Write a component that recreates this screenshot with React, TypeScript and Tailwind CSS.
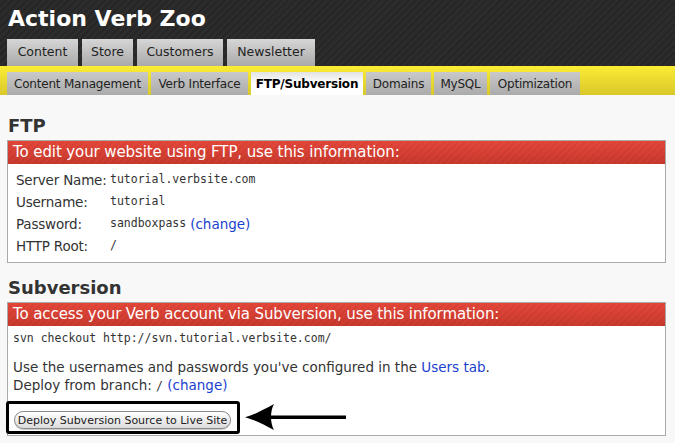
import React from "react";

const topTabs = [
  { label: "Content", w: "w-[71px]" },
  { label: "Store", w: "w-[51px]" },
  { label: "Customers", w: "w-[86px]" },
  { label: "Newsletter", w: "w-[88px]" },
];

const subTabs = [
  { label: "Content Management", w: "w-[141px]" },
  { label: "Verb Interface", w: "w-[97px]" },
  { label: "FTP/Subversion", w: "w-[112px]", active: true },
  { label: "Domains", w: "w-[65px]" },
  { label: "MySQL", w: "w-[53px]" },
  { label: "Optimization", w: "w-[90px]" },
];

const ftpRows = [
  { label: "Server Name:", value: "tutorial.verbsite.com" },
  { label: "Username:", value: "tutorial" },
  { label: "Password:", value: "sandboxpass", change: true },
  { label: "HTTP Root:", value: "/" },
];

const sans = "font-['DejaVu_Sans',Verdana,sans-serif]";
const mono = "font-['DejaVu_Sans_Mono',monospace]";

function RedBar({ children }: { children: React.ReactNode }) {
  return (
    <div className="h-[23px] flex items-center pl-[5px] text-white text-[15px] tracking-[-0.1px] bg-[repeating-linear-gradient(135deg,rgba(0,0,0,0)_0px,rgba(0,0,0,0)_3px,rgba(0,0,0,0.045)_3px,rgba(0,0,0,0.045)_5px),linear-gradient(#e5473a,#c93a2d)]">
      {children}
    </div>
  );
}

export default function App() {
  return (
    <div className={`w-[675px] h-[443px] overflow-hidden bg-[#f8f8f8] ${sans}`}>
      <div className="h-[66px] flex flex-col px-[7px] bg-[repeating-linear-gradient(135deg,#2c2c2c_0px,#2c2c2c_3px,#262626_3px,#262626_5px)]">
        <h1 className="text-white font-bold text-[22px] leading-none pt-[8px] pl-[1px]">
          Action Verb Zoo
        </h1>
        <div className="mt-auto flex gap-[4px]">
          {topTabs.map((t) => (
            <div
              key={t.label}
              className={`${t.w} h-[27px] flex items-center justify-center text-[12.5px] text-[#222] bg-gradient-to-b from-[#d6d6d6] to-[#a9a9a9]`}
            >
              {t.label}
            </div>
          ))}
        </div>
      </div>

      <div className="h-[29px] pt-[6px] px-[7px] flex gap-[3px] bg-gradient-to-b from-[#fbec35] to-[#dac82a]">
        {subTabs.map((t) => (
          <div
            key={t.label}
            className={`${t.w} h-[23px] flex items-center justify-center text-[12px] tracking-[-0.2px] ${
              t.active
                ? "bg-gradient-to-b from-[#e2e2e2] via-white to-white font-bold text-black"
                : "bg-gradient-to-b from-[#c9c9c9] to-[#ababab] text-[#222]"
            }`}
          >
            {t.label}
          </div>
        ))}
      </div>

      <div className="px-[7px]">
        <h2 className="text-[18px] font-bold text-[#333] mt-[20px] mb-[3px] pl-[1px] leading-[22px]">FTP</h2>
        <div className="w-[659px] border border-[#aaa] bg-white">
          <RedBar>To edit your website using FTP, use this information:</RedBar>
          <div className="pl-[8px] pt-[5px] pb-[5px] text-[13.5px] text-[#333]">
            {ftpRows.map((r) => (
              <div key={r.label} className="flex items-center h-[22px]">
                <span className="w-[94px] whitespace-nowrap tracking-[-0.2px]">{r.label}</span>
                <span className={`${mono} text-[11.5px] text-[#333]`}>{r.value}</span>
                {r.change && <span className="text-[#1a3fcf] ml-[4px]">(change)</span>}
              </div>
            ))}
          </div>
        </div>

        <h2 className="text-[18px] font-bold text-[#333] mt-[14px] mb-[3px] pl-[1px] leading-[22px]">
          Subversion
        </h2>
        <div className="relative w-[659px] border border-[#aaa] bg-white">
          <RedBar>To access your Verb account via Subversion, use this information:</RedBar>
          <div className="pl-[5px] pt-[5px] pb-[6px] text-[13.5px] text-[#333]">
            <div className={`${mono} text-[11.5px] h-[14px] leading-[14px]`}>
              svn checkout http://svn.tutorial.verbsite.com/
            </div>
            <p className="mt-[13px] leading-[18px]">
              Use the usernames and passwords you've configured in the{" "}
              <span className="text-[#1a3fcf]">Users tab</span>.
            </p>
            <p className="leading-[18px]">
              Deploy from branch: <span className={`${mono} text-[11.5px]`}>/</span>{" "}
              <span className="text-[#1a3fcf]">(change)</span>
            </p>
            <div className="pt-[16px] pl-[1px] flex">
              <button className="h-[18px] w-[217px] rounded-full border border-[#8a8a8a] bg-gradient-to-b from-white to-[#dcdcdc] text-[11px] leading-none text-[#222] shadow-[0_1px_0_#ccc]">
                Deploy Subversion Source to Live Site
              </button>
            </div>
          </div>
          <div className="absolute left-[-2px] top-[98px] w-[234px] h-[33px] border-[3px] border-black rounded-[3px]" />
          <svg className="absolute left-[236px] top-[100px]" width="104" height="28" viewBox="0 0 104 28">
            <path d="M22 12.5 H102 V16 H22 Z" fill="black" />
            <path d="M1 14.2 C10 12 19 7 30 1 C26 8 26 20 30 27 C19 21 10 16.5 1 14.2 Z" fill="black" />
          </svg>
        </div>
      </div>
    </div>
  );
}
